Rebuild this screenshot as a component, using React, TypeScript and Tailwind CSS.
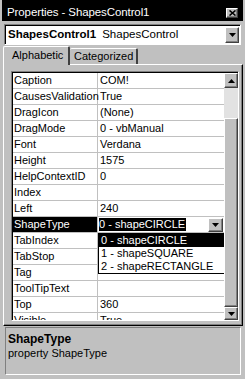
const rows: [string, string][] = [
  ["Caption", "COM!"],
  ["CausesValidation", "True"],
  ["DragIcon", "(None)"],
  ["DragMode", "0 - vbManual"],
  ["Font", "Verdana"],
  ["Height", "1575"],
  ["HelpContextID", "0"],
  ["Index", ""],
  ["Left", "240"],
  ["ShapeType", "0 - shapeCIRCLE"],
  ["TabIndex", ""],
  ["TabStop", ""],
  ["Tag", ""],
  ["ToolTipText", ""],
  ["Top", "360"],
  ["Visible", "True"],
];

const options = ["0 - shapeCIRCLE", "1 - shapeSQUARE", "2 - shapeRECTANGLE"];

const raised =
  "bg-[#c0c0c0] border border-t-white border-l-white border-r-[#404040] border-b-[#404040] shadow-[inset_-1px_-1px_0_#808080]";

function Arrow({ up = false }: { up?: boolean }) {
  return (
    <svg width="7" height="4" viewBox="0 0 7 4" className={up ? "rotate-180" : ""}>
      <path d="M0 0h7L3.5 4z" fill="#000" />
    </svg>
  );
}

function ArrowButton({ up = false, className = "" }: { up?: boolean; className?: string }) {
  return (
    <div className={`${raised} flex items-center justify-center ${className}`}>
      <Arrow up={up} />
    </div>
  );
}

export default function App() {
  return (
    <div
      className="w-[245px] h-[379px] overflow-hidden bg-[#c0c0c0] px-[2px] flex flex-col text-[11px] text-black"
      style={{ fontFamily: '"Liberation Sans", Arial, sans-serif' }}
    >
      {/* title bar */}
      <div className="h-[21px] shrink-0 bg-black text-white flex items-center justify-between pl-[5px] pr-[5px] pt-[4px]">
        <span className="text-[11.5px] tracking-[-0.1px]">Properties - ShapesControl1</span>
        <div className={`${raised} w-[12px] h-[10px] flex items-center justify-center mt-[1px]`}>
          <svg width="7" height="6" viewBox="0 0 7 6">
            <path d="M0.5 0.5l6 5M6.5 0.5l-6 5" stroke="#000" strokeWidth="1.6" />
          </svg>
        </div>
      </div>

      {/* object combo */}
      <div className="mt-[3px] ml-[2px] w-[237px] h-[21px] shrink-0 bg-white border border-t-[#808080] border-l-[#808080] border-r-white border-b-white shadow-[inset_1px_1px_0_#000] flex items-center pl-[3px] pr-[1px]">
        <span className="font-bold text-[11.5px]">ShapesControl1</span>
        <span className="ml-[6px] text-[11.5px]">ShapesControl</span>
        <ArrowButton className="ml-auto w-[14px] h-[16px] mt-[1px]" />
      </div>

      {/* tabs */}
      <div className="mt-[1px] h-[18px] shrink-0 flex items-end pl-[1px]">
        <div className="relative z-10 h-[19px] -mb-[1px] w-[67px] bg-[#c0c0c0] border-l border-t border-white border-r-[2px] border-r-[#404040] rounded-t-[2px] flex items-center pl-[8px] pb-[1px]">
          Alphabetic
        </div>
        <div className="h-[16px] w-[68px] bg-[#c0c0c0] border-t border-white border-r-[2px] border-r-[#404040] rounded-t-[2px] flex items-center pl-[4px]">
          Categorized
        </div>
      </div>

      {/* tab panel */}
      <div className="ml-[1px] w-[240px] h-[262px] shrink-0 border border-t-white border-l-white border-r-[#000] border-b-[#000] shadow-[inset_-1px_-1px_0_#808080] pt-[6px] pl-[7px]">
        <div className="w-[228px] h-[250px] border border-t-[#808080] border-l-[#808080] border-r-white border-b-white shadow-[inset_1px_1px_0_#000] pt-[1px] pl-[1px] flex">
          <div className="relative w-[211px] h-[247px] bg-white overflow-hidden">
            {rows.map(([name, value]) => {
              const sel = name === "ShapeType";
              return (
                <div key={name} className="h-[16px] flex border-b border-[#c0c0c0]">
                  <div
                    className={`w-[85px] pl-[1px] leading-[15px] border-r border-[#c0c0c0] whitespace-nowrap ${
                      sel ? "bg-black text-white" : ""
                    }`}
                  >
                    {name}
                  </div>
                  <div className="flex-1 flex items-center pl-[1px] leading-[15px] whitespace-nowrap">
                    {sel ? (
                      <>
                        <span className="bg-black text-white leading-[13px] pr-[1px]">{value}</span>
                        <ArrowButton className="ml-auto mr-[1px] w-[15px] h-[14px]" />
                      </>
                    ) : (
                      <span className="pl-[1px]">{value}</span>
                    )}
                  </div>
                </div>
              );
            })}

            {/* open dropdown list */}
            <div className="absolute left-[85px] top-[160px] w-[127px] h-[41px] bg-white border border-black">
              {options.map((o, i) => (
                <div
                  key={o}
                  className={`h-[13px] leading-[13px] pl-[2px] whitespace-nowrap ${
                    i === 0 ? "bg-black text-white" : ""
                  }`}
                >
                  {o}
                </div>
              ))}
            </div>
          </div>

          {/* scrollbar */}
          <div className="w-[14px] h-[247px] flex flex-col overflow-hidden">
            <ArrowButton up className="h-[15px] shrink-0" />
            <div className="h-[30px] shrink-0 bg-[#e2e2e2]" />
            <div className={`${raised} flex-1`} />
            <ArrowButton className="h-[13px] shrink-0" />
          </div>
        </div>
      </div>

      {/* description */}
      <div className="mt-[1px] ml-[3px] w-[236px] h-[48px] shrink-0 border border-t-[#808080] border-l-[#808080] border-r-white border-b-white pt-[4px] pl-[2px] leading-[14px]">
        <div className="font-bold text-[12px]">ShapeType</div>
        <div className="text-[11px]">property ShapeType</div>
      </div>
    </div>
  );
}
